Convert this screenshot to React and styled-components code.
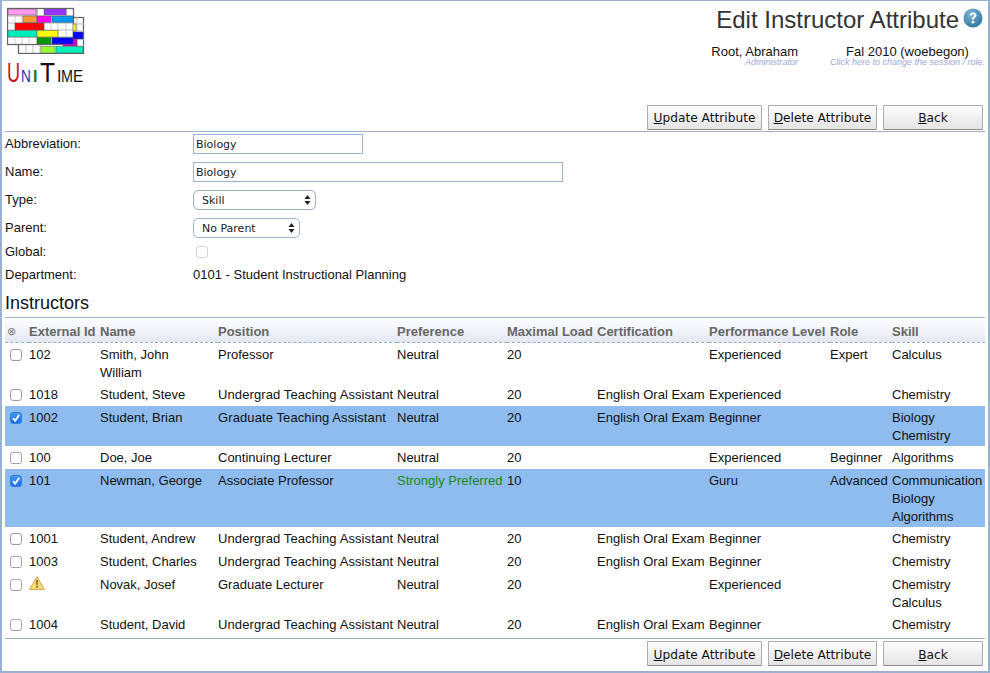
import React from "react";
import styled, { createGlobalStyle } from "styled-components";

const Global = createGlobalStyle`
  html, body { margin: 0; padding: 0; background: #fff; }
  body { font-family: "Liberation Sans", Arial, sans-serif; font-size: 13px; color: #111; }
`;
const Page = styled.div`
  width: 990px; height: 673px; box-sizing: border-box; overflow: hidden;
  border: 2px solid #9cb0d0; border-top-width: 1px;
  padding: 0 3px; display: flex; flex-direction: column;
`;
const Header = styled.header`
  height: 102px; flex: none; display: flex; justify-content: space-between; align-items: flex-start;
`;
const LogoBox = styled.div`
  width: 90px; padding: 6px 0 0 2px; display: flex; flex-direction: column;
`;
const LogoText = styled.div`
  display: flex; align-items: baseline; height: 30px; margin-top: 4px;
  font-family: "Liberation Sans", sans-serif; line-height: 30px;
`;
const LogoLetter = styled.span`
  display: inline-block; width: ${p => p.$w}px; color: ${p => p.$c}; font-size: ${p => p.$s}px;
  font-weight: ${p => p.$b ? 700 : 400}; transform: scaleX(${p => p.$x}); transform-origin: left;
`;
const HeaderRight = styled.div`
  display: flex; flex-direction: column; align-items: flex-end; padding-top: 6px;
`;
const TitleRow = styled.div`display: flex; align-items: flex-start; gap: 4px; height: 26px; padding-right: 2px;`;
const Title = styled.h1`
  margin: 0; font-size: 24px; font-weight: 400; color: #333; line-height: 26px;
`;
const HelpIcon = styled.svg`margin-top: 1px;`;
const UserRow = styled.div`display: flex; margin-top: 12px;`;
const UserBlock = styled.div`
  display: flex; flex-direction: column; align-items: ${p => p.$align};
  width: ${p => p.$w}px; margin-right: ${p => p.$mr || 0}px;
`;
const UserName = styled.span`font-size: 13px; line-height: 13px; color: #111;`;
const UserHint = styled.span`font-size: 9px; font-style: italic; line-height: 9px; color: #9aaad6; white-space: nowrap;`;
const Bar = styled.div`
  display: flex; flex: none; justify-content: flex-end; gap: 6px; align-items: center;
  height: ${p => p.$h}px; padding-right: 2px; box-sizing: border-box;
  ${p => p.$bottom ? "border-bottom: 1px solid #9cb0d0;" : ""}
  ${p => p.$top ? "border-top: 1px solid #9cb0d0; margin-top: 2px;" : ""}
`;
const Button = styled.button`
  width: ${p => p.$w}px; height: 25px; padding: 2px 0 0; box-sizing: border-box;
  border: 1px solid #aeaeae; border-bottom-color: #8e8e8e; border-radius: 1px;
  background: linear-gradient(#fdfdfd, #e4e4e4);
  font-family: "DejaVu Sans", sans-serif; font-size: 12.2px; color: #111;
  u { text-decoration: underline; }
`;
const Form = styled.div`flex: none;`;
const FormRow = styled.div`
  display: grid; grid-template-columns: 188px 1fr; height: ${p => p.$h}px; align-items: center;
  box-sizing: border-box; padding-bottom: 4px;
`;
const Label = styled.label`font-size: 13px; color: #111; padding-bottom: 2px;`;
const Value = styled.span`padding-bottom: 2px;`;
const TextInput = styled.div`
  box-sizing: border-box; width: ${p => p.$w}px; height: 20px; padding: 2px 2px;
  border: 1px solid #9cb3cf; font-family: "DejaVu Sans", sans-serif; font-size: 11px;
  line-height: 15px; color: #222; background: #fff;
`;
const Select = styled.div`
  box-sizing: border-box; width: ${p => p.$w}px; height: 20px; padding: 0 4px 0 8px;
  border: 1px solid #9cb3cf; border-radius: 5px; display: flex; align-items: center; justify-content: space-between;
  font-family: "DejaVu Sans", sans-serif; font-size: 11px; color: #222; background: #fff;
`;
const Check = styled.span`
  display: flex; align-items: center; justify-content: center; box-sizing: border-box;
  width: 12px; height: 12px; border-radius: 3px;
  border: 1px solid ${p => p.$checked ? "#2f7fe0" : p.$disabled ? "#d5d5d5" : "#a0a0a0"};
  background: ${p => p.$checked ? "linear-gradient(#3f97f5,#1f6fe0)" : "#fff"};
`;
const GlobalCheck = styled.div`padding: 0 0 2px 3px;`;
const Heading = styled.h2`
  margin: 2px 0 0; flex: none; font-size: 18px; font-weight: 400; line-height: 22px; color: #111;
  border-bottom: 1px solid #9cb0d0; padding-bottom: 3px;
`;
const Table = styled.table`
  width: 980px; flex: none; table-layout: fixed; border-collapse: collapse; margin-top: 2px;
`;
const Th = styled.th`
  text-align: left; padding: 2px 0 0; height: 22px; box-sizing: border-box; font-size: 13px; font-weight: 700; color: #666;
  background: linear-gradient(#fbfcfe, #e4e8f2); border-bottom: 1px dashed #9cb0d0; white-space: nowrap; overflow: visible;
`;
const Td = styled.td`
  padding: 3px 0 ${p => p.$multi ? 1 : 2}px 0; vertical-align: top; line-height: 18px; white-space: nowrap;
  font-size: 13px; color: ${p => p.$green ? "#138a13" : "#111"};
  letter-spacing: ${p => p.$wide ? "0.1px" : "normal"};
`;
const Tr = styled.tr`background: ${p => p.$sel ? "#8fbcee" : "transparent"};`;
const CheckCell = styled.div`height: 18px; padding-left: 5px; display: flex; align-items: center;`;
const ClearMark = styled.div`padding-left: 2px; font-size: 11px; color: #777; font-weight: 400;`;
const Line = styled.div``;

const Q = () => (
  <HelpIcon width="20" height="20" viewBox="0 0 20 20">
    <defs><radialGradient id="q" cx="40%" cy="30%" r="80%"><stop offset="0" stopColor="#7fb6d6"/><stop offset="1" stopColor="#2a6e9c"/></radialGradient></defs>
    <circle cx="10" cy="10" r="9.5" fill="url(#q)"/>
    <path d="M6.800 7.600c.2-2 1.600-3 3.400-3 1.900 0 3.200 1.100 3.200 2.700 0 2.300-2.500 2.300-2.500 4.300H8.900c0-3 2.400-3 2.400-4.300 0-.7-.5-1.100-1.200-1.100-.8 0-1.200.5-1.300 1.400z" fill="#fff"/>
    <circle cx="9.900" cy="14.200" r="1.400" fill="#fff"/>
  </HelpIcon>
);
const Arrows = () => (
  <svg width="7" height="10" viewBox="0 0 7 10"><path d="M3.500 0 6.500 4H.5zM3.500 10 .5 6h6z" fill="#222"/></svg>
);
const Tick = () => (
  <svg width="10" height="10" viewBox="0 0 10 10"><path d="M2 5.200 4.200 7.800 8.200 1.800" stroke="#fff" strokeWidth="1.800" fill="none"/></svg>
);
const Warn = () => (
  <svg width="16" height="14" viewBox="0 0 16 14">
    <path d="M8 .8 15.300 13.300H.7z" fill="#f8dc7c" stroke="#d9a13a" strokeLinejoin="round"/>
    <path d="M7.200 4h1.600l-.2 5.200H7.400z" fill="#7a5a20"/><rect x="7.200" y="10" width="1.600" height="1.600" fill="#7a5a20"/>
  </svg>
);
const blocks = [
  [8,9,28,6,"#ff99ee"],[44,9,22,6,"#9933ff"],
  [23,16,14,6.500,"#ff9933"],[37,16,14,6.500,"#ff00ff"],[52,16,21,6.500,"#0099ee"],
  [15,23,29,7,"#ff0000"],[73,24,3,7,"#ffff00"],
  [8,30.500,29,6.500,"#00eebb"],[37,30.500,21,6.500,"#ffff00"],[73,32,10,7,"#0000ff"],
  [63,39,14,7,"#cc00cc"],[37,37.500,14,6.500,"#009900"],[52,37.500,21,6.500,"#0000ff"],
  [41,46.500,14,6.500,"#99ff33"],[56,46.500,27,6.500,"#00eebb"],
];
const Logo = () => (
  <svg width="78" height="47" viewBox="7 7 78 47" style={{display:"block"}}>
    <rect x="18.500" y="17.500" width="65" height="36" fill="#fff" stroke="#666" strokeWidth="1.300"/>
    {[26,33,40,77].map(x=><line key={x} x1={x} x2={x} y1="45" y2="53" stroke="#bbb"/>)}
    {[77].map(x=><line key={x} x1={x} x2={x} y1="17" y2="53" stroke="#bbb"/>)}
    {[24,31,39,46].map(y=><line key={y} x1="73" x2="84" y1={y} y2={y} stroke="#bbb"/>)}
    <rect x="7.500" y="8.500" width="66" height="36" fill="#fff" stroke="#666" strokeWidth="1.300"/>
    {[15,22,29,37,44,51,58,66].map(x=><line key={x} x1={x} x2={x} y1="16" y2="44" stroke="#ccc"/>)}
    {[16,23,30,37].map(y=><line key={y} x1="8" x2="73" y1={y} y2={y} stroke="#bbb"/>)}
    {[37,66].map(x=><line key={x} x1={x} x2={x} y1="9" y2="16" stroke="#888"/>)}
    {blocks.map((b,i)=><rect key={i} x={b[0]} y={b[1]} width={b[2]} height={b[3]} fill={b[4]} stroke="#555" strokeWidth=".5"/>)}
  </svg>
);

const rows = [
  {id:"102",name:["Smith, John","William"],pos:"Professor",pref:"Neutral",load:"20",cert:"",lvl:"Experienced",role:"Expert",skill:["Calculus"]},
  {id:"1018",name:["Student, Steve"],pos:"Undergrad Teaching Assistant",pref:"Neutral",load:"20",cert:"English Oral Exam",lvl:"Experienced",role:"",skill:["Chemistry"]},
  {id:"1002",sel:true,name:["Student, Brian"],pos:"Graduate Teaching Assistant",pref:"Neutral",load:"20",cert:"English Oral Exam",lvl:"Beginner",role:"",skill:["Biology","Chemistry"]},
  {id:"100",name:["Doe, Joe"],pos:"Continuing Lecturer",pref:"Neutral",load:"20",cert:"",lvl:"Experienced",role:"Beginner",skill:["Algorithms"]},
  {id:"101",sel:true,name:["Newman, George"],pos:"Associate Professor",pref:"Strongly Preferred",green:true,load:"10",cert:"",lvl:"Guru",role:"Advanced",skill:["Communication","Biology","Algorithms"]},
  {id:"1001",name:["Student, Andrew"],pos:"Undergrad Teaching Assistant",pref:"Neutral",load:"20",cert:"English Oral Exam",lvl:"Beginner",role:"",skill:["Chemistry"]},
  {id:"1003",name:["Student, Charles"],pos:"Undergrad Teaching Assistant",pref:"Neutral",load:"20",cert:"English Oral Exam",lvl:"Beginner",role:"",skill:["Chemistry"]},
  {warn:true,name:["Novak, Josef"],pos:"Graduate Lecturer",pref:"Neutral",load:"20",cert:"",lvl:"Experienced",role:"",skill:["Chemistry","Calculus"]},
  {id:"1004",name:["Student, David"],pos:"Undergrad Teaching Assistant",pref:"Neutral",load:"20",cert:"English Oral Exam",lvl:"Beginner",role:"",skill:["Chemistry"]},
];
const cols = [24,71,118,179,110,90,112,121,62,93];
const heads = ["External Id","Name","Position","Preference","Maximal Load","Certification","Performance Level","Role","Skill"];

const Buttons = () => (
  <>
    <Button $w={115}><u>U</u>pdate Attribute</Button>
    <Button $w={109}><u>D</u>elete Attribute</Button>
    <Button $w={100}><u>B</u>ack</Button>
  </>
);

export default function App() {
  return (
    <Page>
      <Global />
      <Header>
        <LogoBox>
          <Logo />
          <LogoText>
            <LogoLetter $c="#c8141c" $s={27} $x={0.67} $w={14}>U</LogoLetter>
            <LogoLetter $c="#1a2fb0" $s={16} $x={0.85} $w={12}>N</LogoLetter>
            <LogoLetter $c="#157a22" $s={16} $b $x={1} $w={7}>I</LogoLetter>
            <LogoLetter $c="#111" $s={28} $x={0.88} $w={17}>T</LogoLetter>
            <LogoLetter $c="#111" $s={16} $x={1} $w={4}>I</LogoLetter>
            <LogoLetter $c="#111" $s={16} $x={0.9} $w={12}>M</LogoLetter>
            <LogoLetter $c="#111" $s={16} $x={0.95} $w={11}>E</LogoLetter>
          </LogoText>
        </LogoBox>
        <HeaderRight>
          <TitleRow><Title>Edit Instructor Attribute</Title><Q /></TitleRow>
          <UserRow>
            <UserBlock $align="flex-end" $w={120} $mr={32}>
              <UserName>Root, Abraham</UserName>
              <UserHint>Administrator</UserHint>
            </UserBlock>
            <UserBlock $align="center" $w={155}>
              <UserName>Fal 2010 (woebegon)</UserName>
              <UserHint>Click here to change the session / role.</UserHint>
            </UserBlock>
          </UserRow>
        </HeaderRight>
      </Header>
      <Bar $h={29} $bottom><Buttons /></Bar>
      <Form>
        <FormRow $h={28}><Label>Abbreviation:</Label><TextInput $w={170}>Biology</TextInput></FormRow>
        <FormRow $h={28}><Label>Name:</Label><TextInput $w={370}>Biology</TextInput></FormRow>
        <FormRow $h={28}><Label>Type:</Label><Select $w={123}>Skill<Arrows /></Select></FormRow>
        <FormRow $h={28}><Label>Parent:</Label><Select $w={107}>No Parent<Arrows /></Select></FormRow>
        <FormRow $h={20}><Label>Global:</Label><GlobalCheck><Check $disabled /></GlobalCheck></FormRow>
        <FormRow $h={26}><Label>Department:</Label><Value>0101 - Student Instructional Planning</Value></FormRow>
      </Form>
      <Heading>Instructors</Heading>
      <Table>
        <colgroup>{cols.map((w,i)=><col key={i} style={{width:w}} />)}</colgroup>
        <thead>
          <tr>
            <Th><ClearMark>⊗</ClearMark></Th>
            {heads.map(h=><Th key={h}>{h}</Th>)}
          </tr>
        </thead>
        <tbody>
          {rows.map((r,i)=>{
            const multi = r.name.length>1 || r.skill.length>1;
            const lines = a => a.map(t=><Line key={t}>{t}</Line>);
            return (
              <Tr key={i} $sel={r.sel}>
                <Td $multi={multi}><CheckCell><Check $checked={r.sel}>{r.sel && <Tick />}</Check></CheckCell></Td>
                <Td $multi={multi}>{r.warn ? <Warn /> : r.id}</Td>
                <Td $multi={multi}>{lines(r.name)}</Td>
                <Td $multi={multi} $wide={r.pos.includes("Assistant")}>{r.pos}</Td>
                <Td $multi={multi} $green={r.green}>{r.pref}</Td>
                <Td $multi={multi}>{r.load}</Td>
                <Td $multi={multi}>{r.cert}</Td>
                <Td $multi={multi}>{r.lvl}</Td>
                <Td $multi={multi}>{r.role}</Td>
                <Td $multi={multi}>{lines(r.skill)}</Td>
              </Tr>
            );
          })}
        </tbody>
      </Table>
      <Bar $h={31} $top><Buttons /></Bar>
    </Page>
  );
}
